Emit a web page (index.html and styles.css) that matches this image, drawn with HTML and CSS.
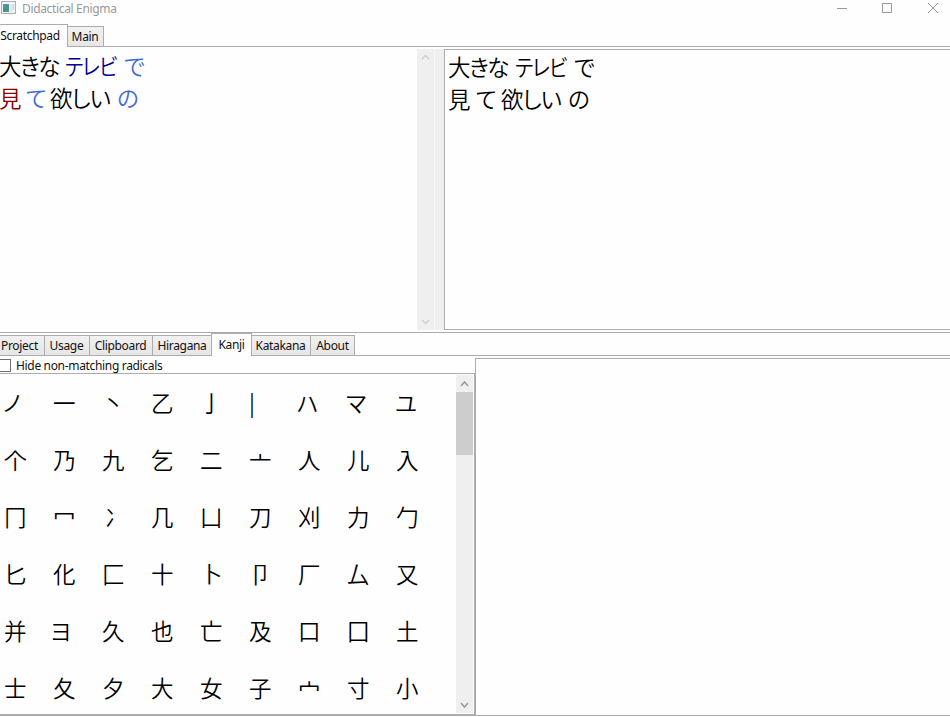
FILE: index.html
```html
<!DOCTYPE html>
<html lang="ja">
<head>
<meta charset="utf-8">
<title>Didactical Enigma</title>
<link rel="stylesheet" href="styles.css">
</head>
<body>
<div class="window">
<header class="titlebar">
<svg class="app-icon" width="16" height="14" viewBox="0 0 16 14"><rect x=".5" y=".5" width="14" height="12" fill="#f4f5f7" stroke="#a9adb2"/><rect x="2" y="3" width="6" height="8" fill="#5a8fae"/><path d="M2 7l6-3v7H2z" fill="#459683"/><rect x="9" y="3" width="3" height="8" fill="#dde6ef"/><rect x="12" y="3" width="1" height="6" fill="#b9d9c1"/></svg>
<span class="title">Didactical Enigma</span>
<svg class="controls" width="114" height="17" viewBox="0 0 114 17" fill="none" stroke="#999"><path d="M1 8.500h10M46.500 3.500h9v9h-9zM92 3l10 10M102 3l-10 10"/></svg>
</header>
<nav class="tabs top-tabs"><span class="tab active scratch">Scratchpad</span><span class="tab main">Main</span></nav>
<section class="scratchpad">
<div class="analysis jp"><p><span class="w big">大きな</span><span class="w tv noun"><span class="narrow">テレビ</span></span><span class="w particle">で</span></p><p><span class="w see verb">見</span><span class="w te particle">て</span><span class="w want">欲しい</span><span class="w particle">の</span></p></div>
<div class="scroll muted"><svg width="17" height="17"><path d="M5 10l3.500-3.500L12 10"/></svg><svg width="17" height="17"><path d="M5 7l3.500 3.500L12 7"/></svg></div>
<div class="splitter"></div>
<div class="input jp"><p><span class="w big">大きな</span><span class="w tv"><span class="narrow">テレビ</span></span><span class="w">で</span></p><p><span class="w see">見</span><span class="w te">て</span><span class="w want">欲しい</span><span class="w">の</span></p></div>
</section>
<nav class="tabs low-tabs"><span class="tab project">Project</span><span class="tab usage">Usage</span><span class="tab clip">Clipboard</span><span class="tab hira">Hiragana</span><span class="tab active kanji">Kanji</span><span class="tab kata">Katakana</span><span class="tab about">About</span></nav>
<section class="lookup">
<div class="left">
<label class="filter"><i class="check"></i><span>Hide non-matching radicals</span></label>
<div class="list">
<div class="grid">
<b class="k">ノ</b><b>一</b><b>丶</b><b>乙</b><b>亅</b><b>|</b><b class="k">ハ</b><b class="k">マ</b><b class="k">ユ</b>
<b>个</b><b>乃</b><b>九</b><b>乞</b><b>二</b><b>亠</b><b>人</b><b>儿</b><b>入</b>
<b>冂</b><b>冖</b><b class="ice">冫</b><b>几</b><b>凵</b><b>刀</b><b>刈</b><b>力</b><b>勹</b>
<b>匕</b><b>化</b><b>匚</b><b>十</b><b>卜</b><b>卩</b><b>厂</b><b>厶</b><b>又</b>
<b>并</b><b class="k yo">ヨ</b><b>久</b><b>也</b><b>亡</b><b>及</b><b>口</b><b>囗</b><b>土</b>
<b>士</b><b>夂</b><b>夕</b><b>大</b><b>女</b><b>子</b><b>宀</b><b>寸</b><b>小</b>
</div>
<div class="scroll"><svg width="17" height="17"><path d="M5 11l3.500-4L12 11"/></svg><div class="thumb"></div><svg width="17" height="17"><path d="M5 7l3.500 4L12 7"/></svg></div>
</div>
</div>
<div class="detail"></div>
</section>
</div>
</body>
</html>
```
FILE: styles.css
```css
* { box-sizing: border-box; }
body { margin: 0; background: #fefefe; color: #111; font: 12px/16px "Noto Sans", "Open Sans", sans-serif; }
p { margin: 0; }
.window { width: 950px; height: 717px; overflow: hidden; display: flex; flex-direction: column; }
.titlebar { height: 24px; display: flex; align-items: flex-start; flex: none; color: #999; }
.app-icon { margin: 1px 5px 0 1px; }
.title { letter-spacing: -.34px; margin-top: 1px; }
.controls { margin-left: auto; }
.tabs { display: flex; align-items: flex-end; flex: none; height: 23px; border-bottom: 1px solid #acacac; letter-spacing: -.33px; white-space: nowrap; }
.tab { height: 20px; line-height: 19px; border: 1px solid #acacac; border-bottom: 0; background: linear-gradient(#f1f1f1, #e6e6e6); text-align: center; margin-right: -1px; flex: none; }
.tab.active { height: 23px; line-height: 22px; margin-bottom: -1px; background: #fefefe; position: relative; }
.scratch { width: 69px; margin-left: -1px; border-left: 0; padding-right: 6px; }
.main { width: 37px; padding-right: 1px; }
.scratchpad { height: 286px; flex: none; display: flex; border-bottom: 1px solid #acacac; padding: 2px 0; }
.analysis { width: 418px; margin-left: -1px; }
.jp { font: 350 22.500px/32px "Noto Sans CJK JP", sans-serif; font-feature-settings: "palt"; white-space: nowrap; color: #000; }
.jp p { display: flex; height: 32px; }
.w { flex: none; }
.big { width: 67px; letter-spacing: -1.500px; }
.analysis .big { width: 66px; }
.tv { width: 59px; letter-spacing: -1px; }
.narrow { display: inline-block; transform: scaleX(.89); transform-origin: left; }
.see { width: 28px; }
.te { width: 25px; }
.analysis .see { width: 27px; }
.analysis .te { width: 24px; }
.want { width: 67px; letter-spacing: -.900px; }
.noun { color: #00008b; }
.verb { color: #8b0000; }
.particle { color: #4169e1; }
.scroll { width: 17px; flex: none; background: #efefef; display: flex; flex-direction: column; }
.scroll svg { flex: none; fill: none; stroke: #999; stroke-width: 1.500; }
.scroll svg:last-child { margin-top: auto; }
.scroll.muted svg { stroke: #d0d0d0; }
.splitter { width: 10px; flex: none; background: #efefef; border-left: 1px solid #f8f8f8; }
.input { flex: 1; border: 1px solid #abadb3; border-right: 0; padding: 0 0 0 3px; }
.low-tabs .tab { line-height: 20px; }
.low-tabs .active { line-height: 22px; }
.project { width: 46px; margin-left: -1px; padding-right: 5px; }
.usage { width: 46px; padding-right: 1px; }
.clip { width: 64px; padding-right: 1px; }
.hira { width: 60px; }
.kanji { width: 41px; }
.kata { width: 60px; padding-right: 1px; }
.about { width: 45px; }
.lookup { height: 360px; flex: none; display: flex; border-bottom: 1px solid #acacac; }
.left { width: 475px; flex: none; }
.filter { display: flex; height: 17px; align-items: center; letter-spacing: -.33px; padding-top: 3px; }
.check { width: 13px; height: 13px; border: 1px solid #707070; margin: -1px 5px 0 -2px; background: #fff; }
.list { height: 342px; border: 1px solid #abadb3; border-left: 0; display: flex; justify-content: space-between; padding: 1px 1px 1px 0; }
.grid { display: grid; grid-template-columns: repeat(9, 49px); grid-auto-rows: 57px; padding-left: 4px; margin-top: -1px; color: #000; }
.grid b { font: 350 22.500px/57px "Noto Sans CJK JP", sans-serif; }
.grid .k { font-feature-settings: "palt"; margin-left: -1px; }
.grid .ice { padding-left: 3px; }
.grid .yo { margin-left: -3px; }
.thumb { height: 63px; background: #cdcdcd; }
.detail { flex: 1; margin-top: 2px; border: 1px solid #abadb3; border-right: 0; border-bottom: 0; }
```
